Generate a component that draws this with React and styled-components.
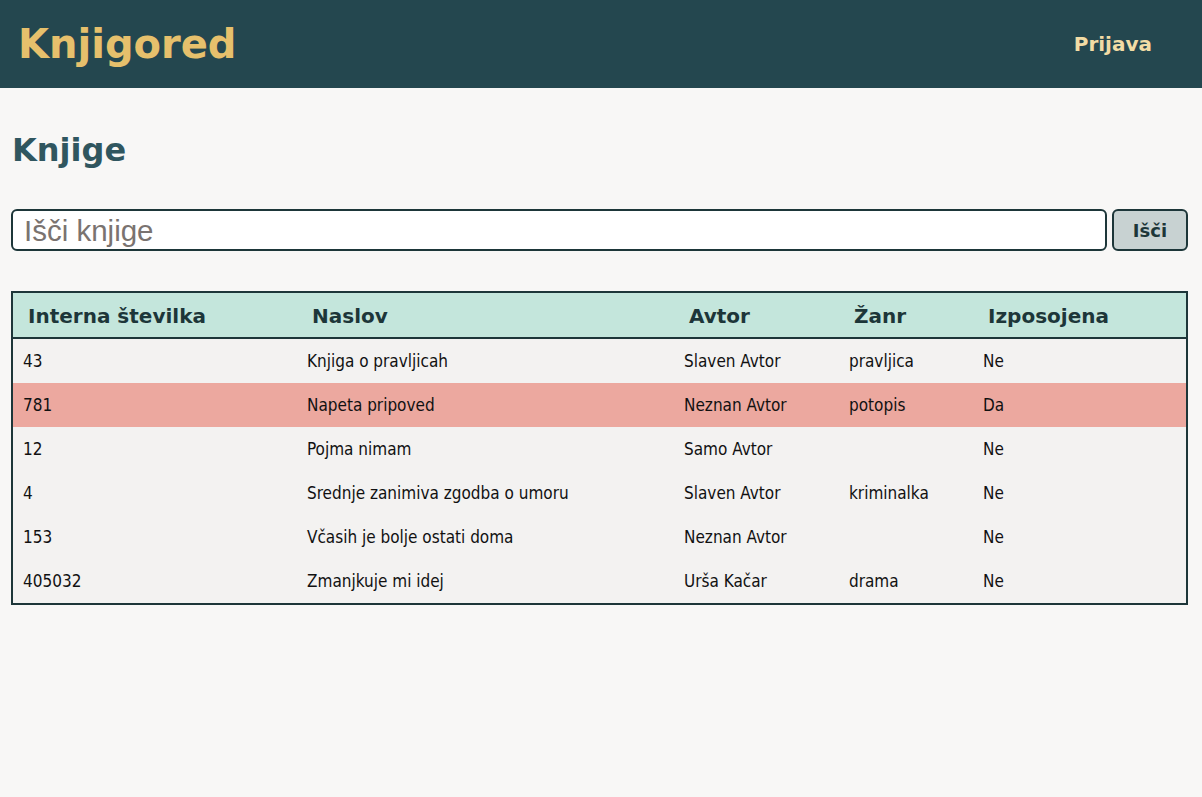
import React from "react";
import styled, { createGlobalStyle } from "styled-components";

const dark = '#1d3639';

const GlobalStyle = createGlobalStyle`
  body {
    margin: 0;
    background: #f8f7f6;
    font-family: 'DejaVu Sans', sans-serif;
  }
`

const Header = styled.header`
  height: 88px;
  background: #24474f;
  display: flex;
  align-items: center;
  justify-content: space-between;
  padding: 0 50px 0 18px;
`

const Logo = styled.h1`
  margin: 0;
  font-size: 40px;
  font-weight: bold;
  color: #e6c06c;
`

const NavLink = styled.a`
  font-size: 20px;
  font-weight: bold;
  color: #f2dca5;
  text-decoration: none;
`

const Main = styled.main`
  padding: 0 14px 0 11px;
`

const Title = styled.h2`
  margin: 42px 0 0 1px;
  font-size: 32px;
  line-height: 40px;
  color: #30565f;
`

const SearchRow = styled.form`
  display: flex;
  gap: 5px;
  margin-top: 39px;
`

const SearchInput = styled.input`
  flex: 1;
  height: 42px;
  box-sizing: border-box;
  border: 2px solid ${dark};
  border-radius: 6px;
  background: #fff;
  font-family: 'Liberation Sans', Arial, sans-serif;
  font-size: 29.5px;
  padding: 2px 11px 0;
  outline: none;

  &::placeholder {
    color: #7a7370;
  }
`

const SearchButton = styled.button`
  width: 76px;
  height: 42px;
  box-sizing: border-box;
  border: 2px solid ${dark};
  border-radius: 6px;
  background: #c8d2d2;
  color: ${dark};
  font-family: 'DejaVu Sans', sans-serif;
  font-size: 18px;
  font-weight: bold;
  cursor: pointer;
`

const Table = styled.table`
  width: 100%;
  margin-top: 40px;
  border-collapse: collapse;
  table-layout: fixed;
  border: 2px solid ${dark};
`

const HeadRow = styled.tr`
  background: #c4e6dc;
  border-bottom: 2px solid ${dark};
`

const Th = styled.th`
  text-align: left;
  height: 42px;
  padding: 2px 0 0 15px;
  font-size: 20px;
  font-weight: bold;
  color: ${dark};
`

const Row = styled.tr`
  background: ${({ $borrowed }) => ($borrowed ? '#eca89f' : '#f3f2f1')};
`

const Td = styled.td`
  height: 44px;
  padding: 0 0 0 10px;
  font-family: 'DejaVu Sans Condensed', 'DejaVu Sans', sans-serif;
  font-size: 17px;
  color: #111;
`

const books = [
  { id: 43, title: 'Knjiga o pravljicah', author: 'Slaven Avtor', genre: 'pravljica', borrowed: false },
  { id: 781, title: 'Napeta pripoved', author: 'Neznan Avtor', genre: 'potopis', borrowed: true },
  { id: 12, title: 'Pojma nimam', author: 'Samo Avtor', genre: '', borrowed: false },
  { id: 4, title: 'Srednje zanimiva zgodba o umoru', author: 'Slaven Avtor', genre: 'kriminalka', borrowed: false },
  { id: 153, title: 'Včasih je bolje ostati doma', author: 'Neznan Avtor', genre: '', borrowed: false },
  { id: 405032, title: 'Zmanjkuje mi idej', author: 'Urša Kačar', genre: 'drama', borrowed: false },
];

export default function App() {
  return (
    <>
      <GlobalStyle />
      <Header>
        <Logo>Knjigored</Logo>
        <NavLink href="#">Prijava</NavLink>
      </Header>
      <Main>
        <Title>Knjige</Title>
        <SearchRow onSubmit={(e) => e.preventDefault()}>
          <SearchInput placeholder="Išči knjige" />
          <SearchButton type="submit">Išči</SearchButton>
        </SearchRow>
        <Table>
          <colgroup>
            <col style={{ width: 285 }} />
            <col style={{ width: 377 }} />
            <col style={{ width: 165 }} />
            <col style={{ width: 134 }} />
            <col />
          </colgroup>
          <thead>
            <HeadRow>
              <Th>Interna številka</Th>
              <Th>Naslov</Th>
              <Th>Avtor</Th>
              <Th>Žanr</Th>
              <Th>Izposojena</Th>
            </HeadRow>
          </thead>
          <tbody>
            {books.map((b) => (
              <Row key={b.id} $borrowed={b.borrowed}>
                <Td>{b.id}</Td>
                <Td>{b.title}</Td>
                <Td>{b.author}</Td>
                <Td>{b.genre}</Td>
                <Td>{b.borrowed ? 'Da' : 'Ne'}</Td>
              </Row>
            ))}
          </tbody>
        </Table>
      </Main>
    </>
  );
}
